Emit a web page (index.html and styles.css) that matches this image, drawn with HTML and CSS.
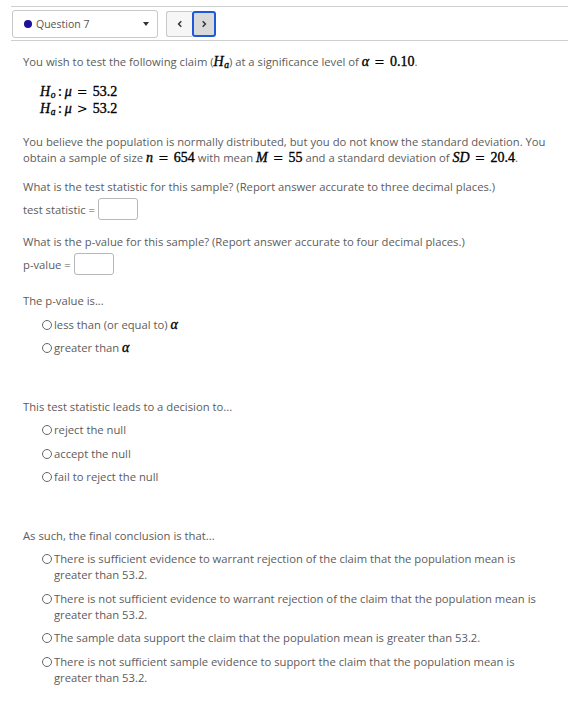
FILE: index.html
```html
<!DOCTYPE html>
<html>
<head>
<meta charset="utf-8">
<link rel="stylesheet" href="styles.css">
</head>
<body>
<div class="header">
  <div class="select">
    <span class="dot"></span>
    <span class="select-label">Question 7</span>
    <span class="caret"></span>
  </div>
  <div class="nav">
    <button class="nav-btn prev"><svg width="8" height="8" viewBox="0 0 8 8"><path d="M5.3 1.3 L2.6 4 L5.3 6.7" fill="none" stroke="#333" stroke-width="1.5"/></svg></button>
    <button class="nav-btn next"><svg width="8" height="8" viewBox="0 0 8 8"><path d="M2.7 1.3 L5.4 4 L2.7 6.7" fill="none" stroke="#333" stroke-width="1.5"/></svg></button>
  </div>
</div>

<div class="content">
  <p class="line first">You wish to test the following claim (<span class="m"><i>H</i><sub><i>a</i></sub></span>) at a significance level of <span class="m"><i>α</i><span class="op">=</span>0.10</span>.</p>

  <div class="hyp">
    <div class="m"><i>H</i><sub><i>o</i></sub><span class="colon">:</span><i>μ</i><span class="op">=</span>53.2</div>
    <div class="m"><i>H</i><sub><i>a</i></sub><span class="colon">:</span><i>μ</i><span class="op">&gt;</span>53.2</div>
  </div>

  <p class="para">You believe the population is normally distributed, but you do not know the standard deviation. You<br>obtain a sample of size <span class="m"><i>n</i><span class="op">=</span>654</span> with mean <span class="m"><i>M</i><span class="op">=</span>55</span> and a standard deviation of <span class="m"><i>SD</i><span class="op">=</span>20.4</span>.</p>

  <p class="q">What is the test statistic for this sample? (Report answer accurate to three decimal places.)</p>
  <div class="answer">test statistic = <span class="box"></span></div>

  <p class="q">What is the p-value for this sample? (Report answer accurate to four decimal places.)</p>
  <div class="answer">p-value = <span class="box"></span></div>

  <p class="q2">The p-value is...</p>
  <ul class="opts">
    <li><span class="radio"></span><span>less than (or equal to) <span class="m"><i>α</i></span></span></li>
    <li><span class="radio"></span><span>greater than <span class="m"><i>α</i></span></span></li>
  </ul>

  <p class="q3">This test statistic leads to a decision to...</p>
  <ul class="opts">
    <li><span class="radio"></span><span>reject the null</span></li>
    <li><span class="radio"></span><span>accept the null</span></li>
    <li><span class="radio"></span><span>fail to reject the null</span></li>
  </ul>

  <p class="q3">As such, the final conclusion is that...</p>
  <ul class="opts">
    <li><span class="radio"></span><span>There is sufficient evidence to warrant rejection of the claim that the population mean is<br>greater than 53.2.</span></li>
    <li><span class="radio"></span><span>There is not sufficient evidence to warrant rejection of the claim that the population mean is<br>greater than 53.2.</span></li>
    <li><span class="radio"></span><span>The sample data support the claim that the population mean is greater than 53.2.</span></li>
    <li><span class="radio"></span><span>There is not sufficient sample evidence to support the claim that the population mean is<br>greater than 53.2.</span></li>
  </ul>
</div>
</body>
</html>
```

FILE: styles.css
```css
body {
  margin: 0;
  font-family: "Open Sans", sans-serif;
  font-size: 11.25px;
  color: #5c5c5c;
  background: #fff;
}
p { margin: 0; }

.header {
  margin: 6px 0 0 11px;
  border-top: 1px solid #cfcfcf;
  border-bottom: 1px solid #cfcfcf;
  padding: 3px 0 2px 1px;
  display: flex;
  align-items: center;
  gap: 8px;
}
.select {
  box-sizing: border-box;
  width: 146px;
  height: 28px;
  border: 1px solid #c8c8c8;
  border-radius: 3px;
  display: flex;
  align-items: center;
  padding: 0 8px 0 11px;
}
.dot {
  width: 8px;
  height: 8px;
  border-radius: 50%;
  background: #1f0f99;
  margin-right: 4px;
}
.select-label { flex: 1; color: #555; font-size: 10.5px; }
.caret {
  width: 0; height: 0;
  border-left: 3px solid transparent;
  border-right: 3px solid transparent;
  border-top: 4px solid #333;
}
.nav { display: flex; }
.nav-btn {
  box-sizing: border-box;
  height: 26px;
  padding: 0;
  display: flex;
  align-items: center;
  justify-content: center;
  font: inherit;
}
.prev {
  width: 26px;
  background: #f6f6f6;
  border: 1px solid #c8c8c8;
  border-right: none;
  border-radius: 3px 0 0 3px;
}
.next {
  width: 24px;
  background: #d9d9d9;
  border: 2px solid #1c5ad8;
  border-radius: 3px;
}

.content { padding-left: 23px; padding-right: 0; }
.line.first { margin-top: 13px; line-height: 16px; }

.m {
  font-family: "Liberation Serif", "DejaVu Serif", serif;
  font-size: 14px;
  line-height: 1;
  color: #000;
  -webkit-text-stroke: 0.35px #000;
}
.m i { font-style: italic; }
.m sub { font-size: 9.5px; vertical-align: -2px; line-height: 0; margin-left: 0.5px; }
.op {
  font-family: "DejaVu Serif", serif;
  font-size: 13px;
  -webkit-text-stroke: 0;
  margin: 0 5px;
}
.colon { margin: 0 3px 0 2.5px; font-style: normal; }

.hyp { margin: 13px 0 0 17px; line-height: 17px; }
.hyp .m { display: block; line-height: 17px; }

.para { margin-top: 17px; line-height: 15.5px; }
.q { margin-top: 14px; line-height: 16px; }
.answer { margin-top: 3px; display: flex; align-items: center; gap: 3px; height: 22px; }
.box {
  display: inline-block;
  box-sizing: border-box;
  width: 40px;
  height: 22px;
  border: 1px solid #b8b8b8;
  border-radius: 3px;
  background: #fff;
}
.q2 { margin-top: 18px; line-height: 16px; }
.q3 { margin-top: 42.5px; line-height: 16px; }

.opts { list-style: none; margin: 0; padding: 0 0 0 19px; }
.opts li { display: flex; align-items: flex-start; margin-top: 7.5px; line-height: 16px; }
.radio {
  flex: none;
  box-sizing: border-box;
  width: 10px;
  height: 10px;
  border: 1px solid #666;
  border-radius: 50%;
  margin: 3px 2px 0 0;
}
```
